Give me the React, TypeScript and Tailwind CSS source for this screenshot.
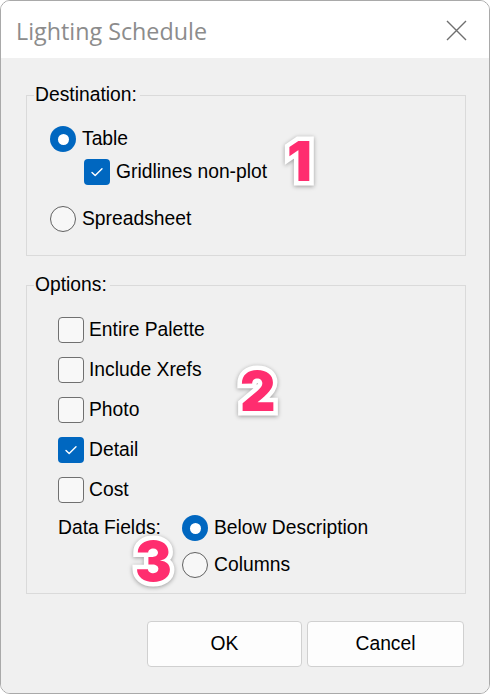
import React from "react";

const font = { fontFamily: '"Liberation Sans", Arial, sans-serif' };

function Radio({ checked }: { checked?: boolean }) {
  return checked ? (
    <span className="flex h-[26px] w-[26px] shrink-0 items-center justify-center rounded-full bg-[#0067c0]">
      <span className="h-[11px] w-[11px] rounded-full bg-white" />
    </span>
  ) : (
    <span className="h-[26px] w-[26px] shrink-0 rounded-full border-[1.5px] border-[#616161] bg-[#f7f7f7]" />
  );
}

function Check({ checked }: { checked?: boolean }) {
  return checked ? (
    <span className="flex h-[26px] w-[26px] shrink-0 items-center justify-center rounded-[4px] bg-[#0067c0]">
      <svg width="14" height="14" viewBox="0 0 14 14" fill="none">
        <path d="M2 7.4l3.2 3.2L12 3.8" stroke="white" strokeWidth="1.4" strokeLinecap="round" strokeLinejoin="round" />
      </svg>
    </span>
  ) : (
    <span className="h-[26px] w-[26px] shrink-0 rounded-[4px] border-[1.5px] border-[#707070] bg-[#f8f8f8]" />
  );
}

function Row({ children, label, gap = "gap-[6px]" }: { children: React.ReactNode; label: string; gap?: string }) {
  return (
    <div className={`flex h-[26px] items-center ${gap}`}>
      {children}
      <span className="text-[19.3px] leading-none text-black">{label}</span>
    </div>
  );
}

function Marker({ n, className }: { n: string; className: string }) {
  return (
    <span
      className={`absolute text-[55px] font-black leading-none text-[#ff2d6f] [paint-order:stroke_fill] [-webkit-text-stroke:9px_white] [filter:drop-shadow(0_1px_2px_rgba(0,0,0,0.35))] ${className}`}
      style={{ fontFamily: 'Inter, "Liberation Sans", sans-serif' }}
    >
      {n}
    </span>
  );
}

export default function App() {
  return (
    <div className="h-[694px] w-[492px] bg-white" style={font}>
      <div className="relative flex h-[694px] w-[490px] flex-col overflow-hidden rounded-[10px] border border-[#a9a9a9]">
        {/* Title bar */}
        <div className="flex h-[57px] shrink-0 items-center justify-between bg-white pl-[15px] pr-[22px] pt-[4px]">
          <span
            className="text-[23.3px] text-[#8c8c8c]"
            style={{ fontFamily: '"Open Sans", "Noto Sans", sans-serif' }}
          >
            Lighting Schedule
          </span>
          <svg width="21" height="21" viewBox="0 0 21 21" className="-mt-[2px]">
            <path d="M1 1L20 20M20 1L1 20" stroke="#6f6f6f" strokeWidth="1.4" />
          </svg>
        </div>

        {/* Body */}
        <div className="flex flex-1 flex-col bg-[#f0f0f0] pl-[25px] pr-[23px] pt-[26px]">
          <fieldset className="border border-[#dadada] px-0 pb-[23px]">
            <legend className="ml-[7px] pl-[1px] pr-[3px] text-[19.3px] leading-[22px] text-black">Destination:</legend>
            <div className="flex flex-col pl-[23px] pt-[20px]">
              <Row label="Table">
                <Radio checked />
              </Row>
              <div className="mt-[7px] pl-[34px]">
                <Row label="Gridlines non-plot">
                  <Check checked />
                </Row>
              </div>
              <div className="mt-[21px]">
                <Row label="Spreadsheet">
                  <Radio />
                </Row>
              </div>
            </div>
          </fieldset>

          <fieldset className="mt-[18px] border border-[#dadada] px-0 pb-[15px]">
            <legend className="ml-[7px] pl-[1px] pr-[3px] text-[19.3px] leading-[22px] text-black">Options:</legend>
            <div className="pl-[31px]">
              <div className="flex flex-col gap-[14px] pt-[21px]">
                <Row label="Entire Palette" gap="gap-[5px]">
                  <Check />
                </Row>
                <Row label="Include Xrefs" gap="gap-[5px]">
                  <Check />
                </Row>
                <Row label="Photo" gap="gap-[5px]">
                  <Check />
                </Row>
                <Row label="Detail" gap="gap-[5px]">
                  <Check checked />
                </Row>
                <Row label="Cost" gap="gap-[5px]">
                  <Check />
                </Row>
              </div>
              <div className="mt-[12px] grid grid-cols-[124px_auto] gap-y-[11px]">
                <div className="flex h-[26px] items-center text-[19.3px] leading-none text-black">Data Fields:</div>
                <Row label="Below Description">
                  <Radio checked />
                </Row>
                <div />
                <Row label="Columns">
                  <Radio />
                </Row>
              </div>
            </div>
          </fieldset>

          <div className="mr-[2px] mt-[27px] flex justify-end gap-[5px]">
            <button className="h-[46px] w-[155px] rounded-[4px] border border-[#d0d0d0] bg-[#fdfdfd] text-[19.3px] text-black">
              OK
            </button>
            <button className="h-[46px] w-[157px] rounded-[4px] border border-[#d0d0d0] bg-[#fdfdfd] text-[19.3px] text-black">
              Cancel
            </button>
          </div>
        </div>

        <Marker n="1" className="left-[286px] top-[133px]" />
        <Marker n="2" className="left-[239px] top-[363px]" />
        <Marker n="3" className="left-[134px] top-[533px]" />
      </div>
    </div>
  );
}
